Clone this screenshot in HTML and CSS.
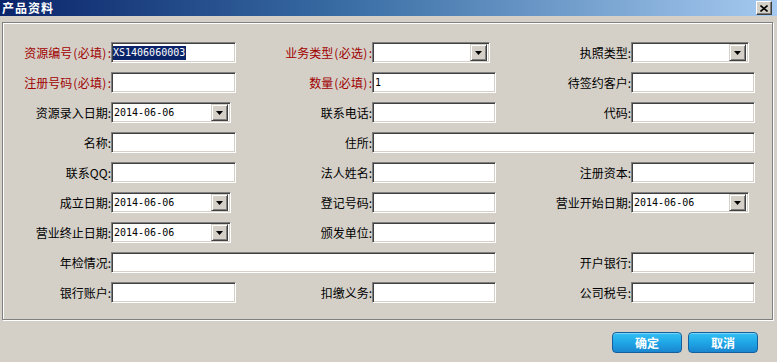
FILE: index.html
```html
<!DOCTYPE html>
<html lang="zh-CN">
<head>
<meta charset="utf-8">
<title>产品资料</title>
<link rel="stylesheet" href="styles.css">
</head>
<body>
<div class="window">
  <div class="titlebar">
    <span class="title">产品资料</span>
    <span class="close"><svg width="8" height="7" viewBox="0 0 8 7"><path d="M0.5 0.5L7.5 6.5M7.5 0.5L0.5 6.5" stroke="#000" stroke-width="1.6" fill="none"/></svg></span>
  </div>
  <div class="group">
    <div class="grid">
      <div class="lbl req">资源编号<span class="paren">(必填)</span>:</div>
      <div class="field"><span class="sel-text">XS1406060003</span></div>
      <div class="lbl req">业务类型<span class="paren">(必选)</span>:</div>
      <div class="field combo w118"><span class="val"></span><span class="drop"><svg width="7" height="4" viewBox="0 0 7 4"><path d="M0 0H7L3.5 4Z" fill="#000"/></svg></span></div>
      <div class="lbl">执照类型:</div>
      <div class="field combo w118"><span class="val"></span><span class="drop"><svg width="7" height="4" viewBox="0 0 7 4"><path d="M0 0H7L3.5 4Z" fill="#000"/></svg></span></div>

      <div class="lbl req">注册号码<span class="paren">(必填)</span>:</div>
      <div class="field"></div>
      <div class="lbl req">数量<span class="paren">(必填)</span>:</div>
      <div class="field">1</div>
      <div class="lbl">待签约客户:</div>
      <div class="field"></div>

      <div class="lbl">资源录入日期:</div>
      <div class="field combo w120"><span class="val">2014-06-06</span><span class="drop"><svg width="7" height="4" viewBox="0 0 7 4"><path d="M0 0H7L3.5 4Z" fill="#000"/></svg></span></div>
      <div class="lbl">联系电话:</div>
      <div class="field"></div>
      <div class="lbl">代码:</div>
      <div class="field"></div>

      <div class="lbl">名称:</div>
      <div class="field"></div>
      <div class="lbl">住所:</div>
      <div class="field span3"></div>

      <div class="lbl">联系QQ:</div>
      <div class="field"></div>
      <div class="lbl">法人姓名:</div>
      <div class="field"></div>
      <div class="lbl">注册资本:</div>
      <div class="field"></div>

      <div class="lbl">成立日期:</div>
      <div class="field combo w120"><span class="val">2014-06-06</span><span class="drop"><svg width="7" height="4" viewBox="0 0 7 4"><path d="M0 0H7L3.5 4Z" fill="#000"/></svg></span></div>
      <div class="lbl">登记号码:</div>
      <div class="field"></div>
      <div class="lbl">营业开始日期:</div>
      <div class="field combo w118"><span class="val">2014-06-06</span><span class="drop"><svg width="7" height="4" viewBox="0 0 7 4"><path d="M0 0H7L3.5 4Z" fill="#000"/></svg></span></div>

      <div class="lbl">营业终止日期:</div>
      <div class="field combo w120"><span class="val">2014-06-06</span><span class="drop"><svg width="7" height="4" viewBox="0 0 7 4"><path d="M0 0H7L3.5 4Z" fill="#000"/></svg></span></div>
      <div class="lbl">颁发单位:</div>
      <div class="field"></div>

      <div class="lbl newrow">年检情况:</div>
      <div class="field span3"></div>
      <div class="lbl">开户银行:</div>
      <div class="field"></div>

      <div class="lbl">银行账户:</div>
      <div class="field"></div>
      <div class="lbl">扣缴义务:</div>
      <div class="field"></div>
      <div class="lbl">公司税号:</div>
      <div class="field"></div>
    </div>
  </div>
  <div class="actions">
    <button class="btn">确定</button>
    <button class="btn">取消</button>
  </div>
</div>
</body>
</html>
```

FILE: styles.css
```css
html, body {
  margin: 0;
  padding: 0;
}
body {
  background: #d4d0c8;
  width: 777px;
  height: 362px;
  overflow: hidden;
  font-family: "Noto Sans CJK SC", "Noto Sans", sans-serif;
  font-size: 12px;
  color: #000;
}
.window {
  width: 777px;
  height: 362px;
}
.titlebar {
  height: 16px;
  background: linear-gradient(to right, #0a246a 0%, #3a6ea5 45%, #a6caf0 100%);
  display: flex;
  align-items: center;
  justify-content: space-between;
  padding: 0 5px 0 2px;
}
.title {
  color: #fff;
  font-weight: bold;
  font-size: 12px;
  line-height: 16px;
  height: 16px;
  letter-spacing: 1px;
  display: flex;
  align-items: center;
}
.close {
  width: 16px;
  height: 14px;
  box-sizing: border-box;
  background: #d4d0c8;
  border: 1px solid;
  border-color: #fff #404040 #404040 #fff;
  box-shadow: inset -1px -1px #808080;
  display: flex;
  align-items: center;
  justify-content: center;
}
.close svg { display: block; }
.group {
  margin: 6px 4px 0 2px;
  height: 298px;
  box-sizing: border-box;
  border: 1px solid #808080;
  box-shadow: inset 1px 1px #fff, 1px 1px #fff;
  padding-top: 19px;
}
.grid {
  display: grid;
  grid-template-columns: 108px 125px 136px 124px 135px 124px;
  grid-auto-rows: 21px;
  row-gap: 9px;
}
.lbl {
  display: flex;
  align-items: center;
  justify-content: flex-end;
  white-space: nowrap;
  line-height: 21px;
}
.lbl .paren {
  margin-left: 1px;
  margin-right: 1px;
  letter-spacing: 0.3px;
}
.lbl.req { color: #a00000; }
.lbl.newrow { grid-column-start: 1; }
.field {
  background: #fff;
  box-sizing: border-box;
  height: 21px;
  border: 1px solid;
  border-color: #808080 #fff #fff #808080;
  box-shadow: inset 1px 1px #404040, inset -1px -1px #d4d0c8;
  font-family: "DejaVu Sans Mono", "Liberation Mono", monospace;
  font-size: 10px;
  line-height: 19px;
  padding-left: 2px;
  white-space: nowrap;
  overflow: hidden;
}
.field.span3 { grid-column: span 3; }
.sel-text {
  background: #0a246a;
  color: #fff;
  display: inline-block;
  line-height: 14px;
  margin-left: -1px;
  padding-right: 1px;
}
.combo {
  display: flex;
  align-items: center;
  padding: 2px;
}
.combo.w120 { width: 120px; }
.combo.w118 { width: 118px; }
.combo .val {
  flex: 1;
  line-height: 17px;
}
.drop {
  width: 17px;
  height: 17px;
  box-sizing: border-box;
  background: #d4d0c8;
  border: 1px solid;
  border-color: #d4d0c8 #404040 #404040 #d4d0c8;
  box-shadow: inset 1px 1px #fff, inset -1px -1px #808080;
  display: flex;
  align-items: center;
  justify-content: center;
}
.drop svg { display: block; }
.actions {
  display: flex;
  justify-content: flex-end;
  gap: 6px;
  padding-right: 19px;
  margin-top: 12px;
}
.btn {
  width: 70px;
  height: 21px;
  margin: 0;
  padding: 0;
  border: 1px solid #15609c;
  border-radius: 4px;
  background: linear-gradient(to bottom, #33c0f4 0%, #1fa6e6 50%, #1a86d0 100%);
  box-shadow: inset 0 1px rgba(255,255,255,0.35);
  color: #fff;
  font-family: "Noto Sans CJK SC", "Noto Sans", sans-serif;
  font-size: 12px;
  font-weight: bold;
  line-height: 19px;
}
```
